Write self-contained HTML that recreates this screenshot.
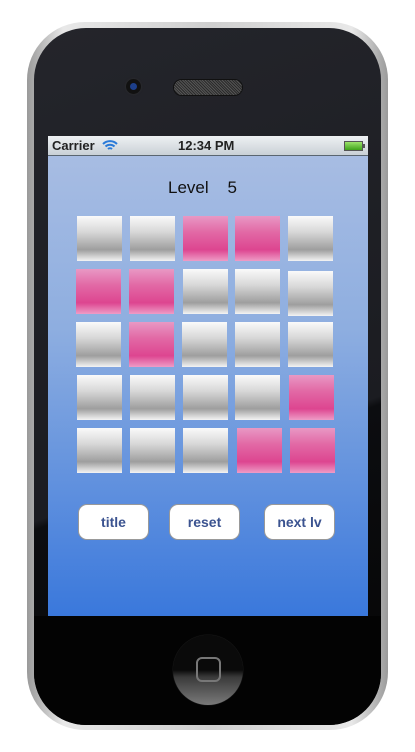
<!DOCTYPE html><html><head><style>
body{margin:0;width:415px;height:752px;background:#fff;position:relative;overflow:hidden;font-family:"Liberation Sans",sans-serif}
.phone{position:absolute;left:27px;top:22px;width:361px;height:708px;border-radius:58px;background:linear-gradient(90deg,#9a9a9a,#e8e8e8 10%,#cfcfcf 50%,#e8e8e8 90%,#9a9a9a);}
.inner{position:absolute;left:34px;top:28px;width:347px;height:697px;border-radius:52px;background:linear-gradient(160deg,#24252b,#1b1c21 60%,#0c0d10 61%,#050505);}
.inner2{position:absolute;left:34px;top:616px;width:347px;height:109px;border-radius:0 0 52px 52px;background:#030303}
.screen{position:absolute;left:48px;top:136px;width:320px;height:480px;background:linear-gradient(#aabee3,#8eaee0 40%,#3a78dc);}
.sb{position:absolute;left:0;top:0;width:320px;height:19px;background:linear-gradient(#eef1f3,#c9d0d6);border-bottom:1px solid #5a6570;font-weight:bold;font-size:13px;color:#222}
.t{position:absolute;width:45px;height:45px}
.g{background:linear-gradient(#fafafa,#d8d8d8 35%,#9e9e9e 75%,#f4f4f4)}
.p{background:linear-gradient(#e898c4,#e26aa6 35%,#dd4590 75%,#ee9cc6)}
.b{position:absolute;top:368px;width:69px;height:34px;border:1px solid #999;border-radius:9px;background:#fff;color:#3b5390;font-weight:bold;font-size:14px;text-align:center;line-height:34px}
</style></head><body>
<div class="phone"></div><div class="inner"></div><div class="inner2"></div>
<div style="position:absolute;left:126px;top:79px;width:15px;height:15px;border-radius:50%;background:#111;box-shadow:0 0 2px #333"><div style="position:absolute;left:4px;top:4px;width:7px;height:7px;border-radius:50%;background:#1d3f8a"></div></div>
<div style="position:absolute;left:174px;top:80px;width:68px;height:15px;border-radius:8px;background:repeating-linear-gradient(45deg,#555 0 1px,#2a2a2a 1px 2px);box-shadow:0 0 0 1px #111"></div>
<div style="position:absolute;left:173px;top:635px;width:70px;height:70px;border-radius:50%;background:linear-gradient(#0a0a0a 50%,#3a3a3a 60%,#7a7a7a);box-shadow:0 0 1px #444"></div>
<div style="position:absolute;left:196px;top:657px;width:21px;height:21px;border:2px solid #777;border-radius:6px"></div>
<div class="screen">
<div class="sb"><span style="position:absolute;left:4px;top:2px">Carrier</span>
<svg style="position:absolute;left:54px;top:3px" width="16" height="12" viewBox="0 0 16 12"><path d="M1 5a10 10 0 0 1 14 0M3.5 7.5a6.5 6.5 0 0 1 9 0M6 10a3 3 0 0 1 4 0" stroke="#2a7ad8" stroke-width="2" fill="none"/></svg>
<span style="position:absolute;left:130px;top:2px">12:34 PM</span>
<div style="position:absolute;left:296px;top:5px;width:17px;height:8px;border:1px solid #555;background:linear-gradient(#9be26a,#3ea21a)"></div><div style="position:absolute;left:315px;top:8px;width:2px;height:4px;background:#555"></div></div>
<div style="position:absolute;left:120px;top:42px;font-size:17px;color:#111">Level&nbsp;&nbsp;&nbsp;&nbsp;5</div>
<div class="t g" style="left:29px;top:80px"></div><div class="t g" style="left:82px;top:80px"></div><div class="t p" style="left:135px;top:80px"></div><div class="t p" style="left:187px;top:80px"></div><div class="t g" style="left:240px;top:80px"></div>
<div class="t p" style="left:28px;top:133px"></div><div class="t p" style="left:81px;top:133px"></div><div class="t g" style="left:135px;top:133px"></div><div class="t g" style="left:187px;top:133px"></div><div class="t g" style="left:240px;top:135px"></div>
<div class="t g" style="left:28px;top:186px"></div><div class="t p" style="left:81px;top:186px"></div><div class="t g" style="left:134px;top:186px"></div><div class="t g" style="left:187px;top:186px"></div><div class="t g" style="left:240px;top:186px"></div>
<div class="t g" style="left:29px;top:239px"></div><div class="t g" style="left:82px;top:239px"></div><div class="t g" style="left:135px;top:239px"></div><div class="t g" style="left:187px;top:239px"></div><div class="t p" style="left:241px;top:239px"></div>
<div class="t g" style="left:29px;top:292px"></div><div class="t g" style="left:82px;top:292px"></div><div class="t g" style="left:135px;top:292px"></div><div class="t p" style="left:189px;top:292px"></div><div class="t p" style="left:242px;top:292px"></div>
<div class="b" style="left:30px">title</div><div class="b" style="left:121px">reset</div><div class="b" style="left:216px">next lv</div>
</div>
</body></html>
